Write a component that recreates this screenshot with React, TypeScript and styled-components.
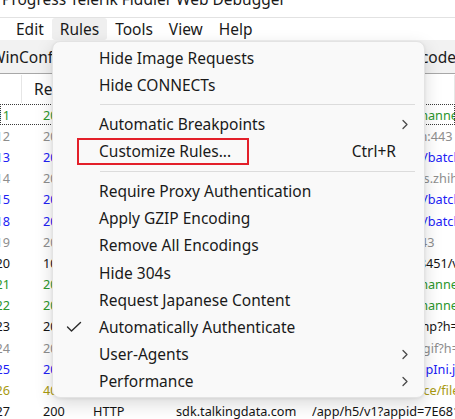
import React from "react";
import styled, { createGlobalStyle } from "styled-components";

const Global = createGlobalStyle`
  html, body { margin: 0; padding: 0; background: #ffffff; }
  body { font-family: "Noto Sans", "Open Sans", sans-serif; color: #1a1a1a; }
`;

const Window = styled.div`
  position: relative;
  width: 455px;
  height: 419px;
  overflow: hidden;
  background: #ffffff;
  display: flex;
  flex-direction: column;
`;

const TitleBar = styled.div`
  flex: none;
  height: 17px;
  overflow: hidden;
  border-bottom: 1px solid #e2e2e2;
`;

const TitleText = styled.div`
  margin-top: -11.5px;
  padding-left: 2px;
  font-size: 15.5px;
  line-height: 20px;
  white-space: nowrap;
  color: #1a1a1a;
`;

const MenuBar = styled.div`
  flex: none;
  height: 22px;
  display: flex;
  padding-left: 8px;
`;

const MenuBarItem = styled.div<{ $active?: boolean }>`
  padding: 0 8px;
  font-size: 15.5px;
  line-height: 22px;
  border-radius: 3px;
  background: ${(p) => (p.$active ? "#efefef" : "transparent")};
`;

const Toolbar = styled.div`
  flex: none;
  height: 33px;
  display: flex;
  align-items: center;
  justify-content: space-between;
  background: #f2f2f2;
  border-bottom: 1px solid #a8a8a8;
  overflow: hidden;
`;

const ToolButton = styled.div<{ $edge: "left" | "right" }>`
  font-size: 15.5px;
  white-space: nowrap;
  margin-left: ${(p) => (p.$edge === "left" ? "-9px" : "0")};
  margin-right: ${(p) => (p.$edge === "right" ? "-1px" : "0")};
`;

const ListHeader = styled.div`
  flex: none;
  height: 30px;
  display: grid;
  grid-template-columns: 22px 71px 83px 136px 1fr;
  background: #ffffff;
`;

const HeaderCell = styled.div<{ $pad?: number }>`
  display: flex;
  align-items: center;
  padding-left: ${(p) => p.$pad ?? 0}px;
  font-size: 15.5px;
  white-space: nowrap;
  overflow: hidden;
  border-right: 1px solid #e6e6e6;
  margin: 1px 0;
`;

const Rows = styled.div`
  display: flex;
  flex-direction: column;
`;

const tones: Record<string, string> = {
  green: "#2c962c",
  grey: "#8e8e8e",
  blue: "#2121f5",
  black: "#141414",
  olive: "#a89a10",
};

const Row = styled.div<{ $tone: string; $focus?: boolean }>`
  height: 21.2px;
  flex: none;
  display: grid;
  grid-template-columns: 22px 71px 83px 136px 1fr;
  align-items: center;
  font-size: 12.7px;
  color: ${(p) => tones[p.$tone]};
  white-space: nowrap;
  outline: ${(p) => (p.$focus ? "1px dotted #3a3a3a" : "none")};
  outline-offset: -1px;
`;

const NumCell = styled.div`
  display: flex;
  justify-content: flex-end;
  padding-right: 12px;
  overflow: hidden;
`;

const Cell = styled.div<{ $pad?: number }>`
  padding-left: ${(p) => p.$pad ?? 0}px;
  overflow: hidden;
`;

const Popup = styled.div`
  position: absolute;
  left: 52px;
  top: 41px;
  width: 373px;
  box-sizing: border-box;
  padding: 2px 0 2.5px;
  background: #f9f9f9;
  border: 1px solid #e3e3e3;
  border-radius: 8px;
  box-shadow: 0 6px 18px rgba(0, 0, 0, 0.15), 0 1px 3px rgba(0, 0, 0, 0.07);
  display: flex;
  flex-direction: column;
`;

const Item = styled.div`
  position: relative;
  height: 27.2px;
  display: flex;
  align-items: center;
  padding-right: 15px;
  font-size: 15.5px;
  color: #1a1a1a;
  white-space: nowrap;
`;

const CheckSlot = styled.div`
  width: 46px;
  flex: none;
  display: flex;
  align-items: center;
  padding-left: 13px;
  box-sizing: border-box;
`;

const Label = styled.div`
  flex: 1;
`;

const Shortcut = styled.div`
  padding-right: 13px;
`;

const Separator = styled.div`
  height: 1px;
  background: #dcdcdc;
  margin: 6px 9px 5.3px 47px;
`;

const Annotation = styled.div`
  position: absolute;
  left: 24px;
  top: 0;
  width: 172px;
  height: 27px;
  box-sizing: border-box;
  border: 2px solid #e3202a;
  pointer-events: none;
`;

const Check = () => (
  <svg width="16" height="12" viewBox="0 0 16 12">
    <polyline points="1.5,6 5.5,10 14.5,1.5" fill="none" stroke="#2b2b2b" strokeWidth="1.4" strokeLinecap="round" strokeLinejoin="round" />
  </svg>
);

const Chevron = () => (
  <svg width="8" height="11" viewBox="0 0 8 11">
    <polyline points="2,1.5 6,5.5 2,9.5" fill="none" stroke="#4a4a4a" strokeWidth="1.3" strokeLinecap="round" strokeLinejoin="round" />
  </svg>
);

type Entry =
  | { kind: "sep" }
  | { kind: "item"; label: string; shortcut?: string; sub?: boolean; checked?: boolean; marked?: boolean };

const menu: Entry[] = [
  { kind: "item", label: "Hide Image Requests" },
  { kind: "item", label: "Hide CONNECTs" },
  { kind: "sep" },
  { kind: "item", label: "Automatic Breakpoints", sub: true },
  { kind: "item", label: "Customize Rules...", shortcut: "Ctrl+R", marked: true },
  { kind: "sep" },
  { kind: "item", label: "Require Proxy Authentication" },
  { kind: "item", label: "Apply GZIP Encoding" },
  { kind: "item", label: "Remove All Encodings" },
  { kind: "item", label: "Hide 304s" },
  { kind: "item", label: "Request Japanese Content" },
  { kind: "item", label: "Automatically Authenticate", checked: true },
  { kind: "item", label: "User-Agents", sub: true },
  { kind: "item", label: "Performance", sub: true },
];

type Session = { n: number; result: string; proto: string; host: string; url: string; tone: string };

const sessions: Session[] = [
  { n: 11, result: "200", proto: "HTTPS", host: "www.zhihu.com", url: "/ws/v2/push/usr/channel", tone: "green" },
  { n: 12, result: "200", proto: "HTTP", host: "Tunnel to", url: "datahub.zhihu.com:443", tone: "grey" },
  { n: 13, result: "200", proto: "HTTPS", host: "api.zhihu.com", url: "/collects/v2/events/batch", tone: "blue" },
  { n: 14, result: "200", proto: "HTTP", host: "Tunnel to", url: "zhihu-web-analytics.zhihu.com:443", tone: "grey" },
  { n: 15, result: "200", proto: "HTTPS", host: "api.zhihu.com", url: "/collects/v2/events/batch", tone: "blue" },
  { n: 18, result: "200", proto: "HTTPS", host: "api.zhihu.com", url: "/collects/v2/events/batch", tone: "blue" },
  { n: 19, result: "200", proto: "HTTP", host: "Tunnel to", url: "sugar.zhihu.com:443", tone: "grey" },
  { n: 20, result: "101", proto: "HTTP", host: "192.168.1.1:8451", url: "wss://192.168.1.1:8451/v1/ws", tone: "black" },
  { n: 21, result: "200", proto: "HTTPS", host: "www.zhihu.com", url: "/ws/v2/push/usr/channel", tone: "green" },
  { n: 22, result: "200", proto: "HTTPS", host: "www.zhihu.com", url: "/ws/v2/push/usr/channel", tone: "green" },
  { n: 23, result: "200", proto: "HTTP", host: "hm.baidu.com", url: "/hm.js?abcdef/stamp?h=1", tone: "black" },
  { n: 24, result: "200", proto: "HTTP", host: "hm.baidu.com", url: "/hm.js?abcdef/hm.gif?h=1", tone: "grey" },
  { n: 25, result: "200", proto: "HTTP", host: "config.zhihu.com", url: "/api/v1/config/setupIni.json", tone: "blue" },
  { n: 26, result: "404", proto: "HTTP", host: "static.zhihu.com", url: "/heifetz/api/resource/file.js", tone: "olive" },
  { n: 27, result: "200", proto: "HTTP", host: "sdk.talkingdata.com", url: "/app/h5/v1?appid=7E6818F4C2A9", tone: "black" },
];

export default function App() {
  return (
    <Window>
      <Global />
      <TitleBar>
        <TitleText>Progress Telerik Fiddler Web Debugger</TitleText>
      </TitleBar>
      <MenuBar>
        <MenuBarItem>Edit</MenuBarItem>
        <MenuBarItem $active>Rules</MenuBarItem>
        <MenuBarItem>Tools</MenuBarItem>
        <MenuBarItem>View</MenuBarItem>
        <MenuBarItem>Help</MenuBarItem>
      </MenuBar>
      <Toolbar>
        <ToolButton $edge="left">WinConfig</ToolButton>
        <ToolButton $edge="right">Decode</ToolButton>
      </Toolbar>
      <ListHeader>
        <HeaderCell />
        <HeaderCell $pad={12}>Result</HeaderCell>
        <HeaderCell $pad={8}>Protocol</HeaderCell>
        <HeaderCell $pad={8}>Host</HeaderCell>
        <HeaderCell $pad={8}>URL</HeaderCell>
      </ListHeader>
      <Rows>
        {sessions.map((s, i) => (
          <Row key={s.n} $tone={s.tone} $focus={i === 0}>
            <NumCell>{s.n}</NumCell>
            <Cell $pad={21}>{s.result}</Cell>
            <Cell>{s.proto}</Cell>
            <Cell>{s.host}</Cell>
            <Cell>{s.url}</Cell>
          </Row>
        ))}
      </Rows>
      <Popup>
        {menu.map((e, i) =>
          e.kind === "sep" ? (
            <Separator key={i} />
          ) : (
            <Item key={i}>
              <CheckSlot>{e.checked ? <Check /> : null}</CheckSlot>
              <Label>{e.label}</Label>
              {e.shortcut ? <Shortcut>{e.shortcut}</Shortcut> : null}
              {e.sub ? <Chevron /> : null}
              {e.marked ? <Annotation /> : null}
            </Item>
          )
        )}
      </Popup>
    </Window>
  );
}
